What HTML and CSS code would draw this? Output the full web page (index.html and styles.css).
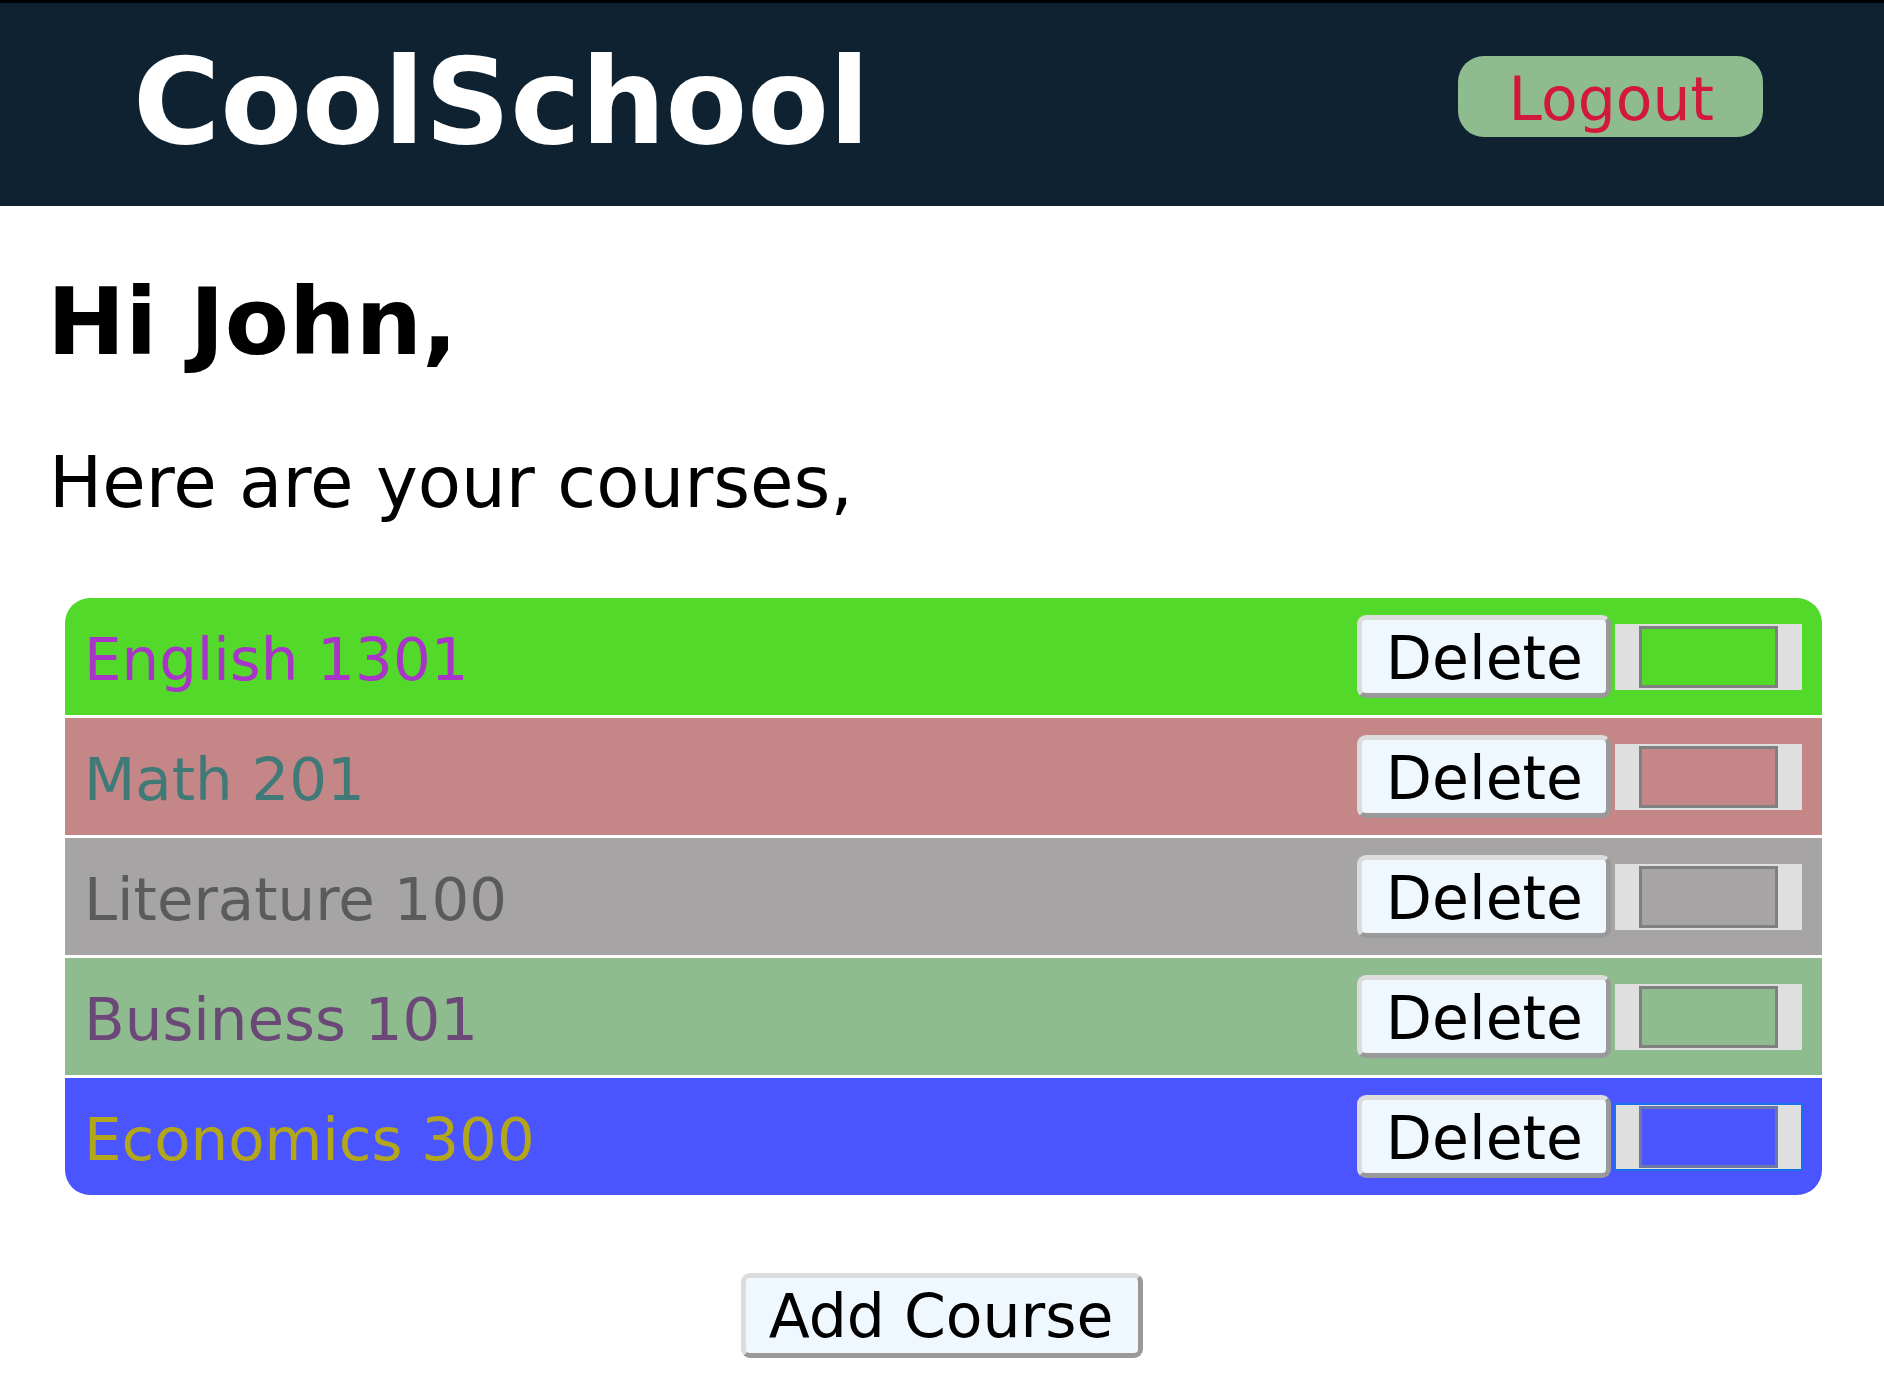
FILE: index.html
```html
<!DOCTYPE html>
<html lang="en">
<head>
<meta charset="utf-8">
<title>CoolSchool</title>
<link rel="stylesheet" href="styles.css">
</head>
<body>
<header class="topbar">
  <div class="logo">CoolSchool</div>
  <button class="logout" type="button">Logout</button>
</header>
<main class="content">
  <h1 class="greeting">Hi John,</h1>
  <p class="intro">Here are your courses,</p>
  <ul class="courses">
    <li class="course course-english">
      <span class="course-name">English 1301</span>
      <button class="btn delete" type="button">Delete</button>
      <input class="swatch" type="color" value="#52d92a">
    </li>
    <li class="course course-math">
      <span class="course-name">Math 201</span>
      <button class="btn delete" type="button">Delete</button>
      <input class="swatch" type="color" value="#c48686">
    </li>
    <li class="course course-lit">
      <span class="course-name">Literature 100</span>
      <button class="btn delete" type="button">Delete</button>
      <input class="swatch" type="color" value="#a6a4a5">
    </li>
    <li class="course course-business">
      <span class="course-name">Business 101</span>
      <button class="btn delete" type="button">Delete</button>
      <input class="swatch" type="color" value="#8fbc8f">
    </li>
    <li class="course course-econ">
      <span class="course-name">Economics 300</span>
      <button class="btn delete" type="button">Delete</button>
      <input class="swatch swatch-focused" type="color" value="#4b55ff">
    </li>
  </ul>
  <div class="actions">
    <button class="btn add" type="button">Add Course</button>
  </div>
</main>
</body>
</html>
```
FILE: styles.css
```css
* { box-sizing: border-box; }

html, body {
  margin: 0;
  padding: 0;
  background: #ffffff;
  font-family: "DejaVu Sans", Verdana, sans-serif;
  color: #000;
}

.topbar {
  display: flex;
  justify-content: space-between;
  align-items: flex-start;
  border-top: 3px solid #000;
  background: #0f2231;
  height: 206px;
  padding: 29px 121px 0 133px;
}

.logo {
  font-size: 119px;
  font-weight: bold;
  line-height: 140px;
  color: #ffffff;
}

.logout {
  margin-top: 24px;
  font-family: inherit;
  font-size: 60px;
  line-height: 70px;
  height: 81px;
  padding: 8px 49px 3px 51px;
  border: none;
  border-radius: 26px;
  background: #8fbc8f;
  color: #d2183c;
}

.content {
  padding: 0 47px;
}

.greeting {
  margin: 62px 0 0;
  font-size: 93.5px;
  line-height: 107px;
  font-weight: bold;
}

.intro {
  margin: 67px 0 0 2px;
  font-size: 70.7px;
  line-height: 82px;
}

.courses {
  list-style: none;
  margin: 74px 15px 0 18px;
  padding: 0;
  display: flex;
  flex-direction: column;
  gap: 3px;
  border-radius: 25px;
  overflow: hidden;
}

.course {
  display: flex;
  align-items: center;
  height: 117px;
  padding: 0 20px 0 19px;
}

.course-name {
  flex: 1;
  padding-top: 6px;
  font-size: 59.4px;
  line-height: 70px;
}

.course-english { background: #52d92a; }
.course-english .course-name { color: #a834c8; }
.course-math { background: #c48686; }
.course-math .course-name { color: #3f7a78; }
.course-lit { background: #a6a4a5; }
.course-lit .course-name { color: #5b5b5b; }
.course-business { background: #8fbc8f; }
.course-business .course-name { color: #6c4878; }
.course-econ { background: #4b55ff; }
.course-econ .course-name { color: #b3a61a; }

.btn {
  font-family: inherit;
  font-size: 60px;
  line-height: 70px;
  color: #000;
  background: #f0f8ff;
  border: 5px solid;
  border-color: #dcdcdc #999999 #999999 #dcdcdc;
  border-radius: 9px;
}

.delete {
  padding: 3px 23px 0 24px;
  margin-right: 4px;
}

.swatch {
  width: 187px;
  height: 66px;
  padding: 0;
  margin: 0;
  border: none;
  background: #dfdfdf;
}

.swatch::-webkit-color-swatch-wrapper {
  padding: 2px 24px;
}

.swatch::-webkit-color-swatch {
  border: 3px solid #808080;
  border-radius: 0;
}

.swatch-focused {
  outline: 2px solid #1a73e8;
  outline-offset: -1px;
}

.swatch-focused::-webkit-color-swatch {
  border-color: #6c78a6;
}

.actions {
  display: flex;
  justify-content: center;
  margin-top: 78px;
}

.add {
  padding: 3px 25px 2px 23px;
}
```
